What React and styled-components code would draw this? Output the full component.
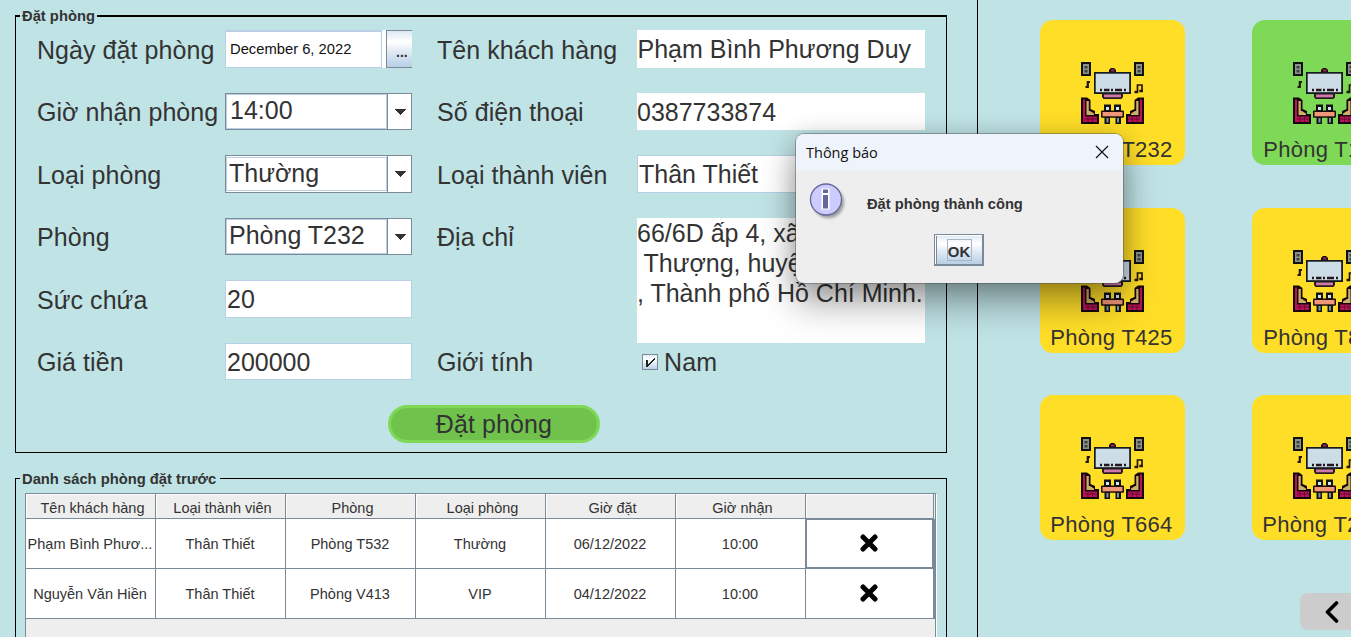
import React from "react";
import styled, { createGlobalStyle } from "styled-components";

const Global = createGlobalStyle`
  * { box-sizing: border-box; }
  html, body { margin: 0; height: 637px; overflow: hidden; }
  body { background: #c0e3e6; color: #333; font-family: "Liberation Sans", Arial, sans-serif; }
`;

const Page = styled.div`
  position: relative;
  display: flex;
  width: 1351px;
  height: 637px;
  overflow: hidden;
  background: #c0e3e6;
`;

const Left = styled.main`
  flex: none;
  width: 978px;
  height: 637px;
  padding: 8px 0 0 15px;
  border-right: 1px solid #000;
  overflow: hidden;
`;

const Group = styled.fieldset`
  width: 932px;
  height: ${(p) => p.$height}px;
  margin: 0 0 ${(p) => p.$after || 0}px;
  padding: 0 0 0 4px;
  border: 1px solid #000;
  border-top-width: ${(p) => p.$top || 1}px;
  min-width: 0;
`;

const Legend = styled.legend`
  width: ${(p) => p.$width}px;
  height: ${(p) => p.$height}px;
  padding: 0 0 0 2px;
  font-size: 14.75px;
  font-weight: bold;
  line-height: ${(p) => p.$height + 1}px;
  white-space: nowrap;
`;

const Form = styled.div`
  display: grid;
  grid-template-columns: 188px 187px 25px 200px 288px;
  grid-template-rows: repeat(6, 37.5px);
  row-gap: 25px;
  margin: ${(p) => p.$top}px 0 0 17px;
`;

const Label = styled.label`
  grid-column: ${(p) => p.$col};
  display: flex;
  align-items: center;
  padding-top: 1.5px;
  font-size: 25px;
  line-height: 30px;
  letter-spacing: 0.06px;
  white-space: nowrap;
`;

const Field = styled.div`
  grid-column: ${(p) => p.$col};
  display: flex;
  align-items: center;
  padding-top: ${(p) => (p.$plain ? 2 : 1.5)}px;
  padding-left: ${(p) => p.$pad ?? 1}px;
  background: #fff;
  border: ${(p) => (p.$plain ? "0" : "1px solid #b8cfe5")};
  font-size: 25px;
  white-space: nowrap;
`;

const Combo = styled.div`
  grid-column: 2;
  display: flex;
  background: #fff;
  border: 1px solid #7a8a99;
`;

const ComboText = styled.div`
  flex: 1;
  display: flex;
  align-items: center;
  margin: ${(p) => (p.$inset ? "1px 0" : "0")};
  padding: 0 0 ${(p) => p.$lift}px ${(p) => p.$pad}px;
  border: 1px solid #b8cfe5;
  font-size: 25px;
  white-space: nowrap;
`;

const ComboArrow = styled.div`
  width: 24px;
  display: flex;
  align-items: center;
  justify-content: center;
  padding-top: 1px;
  border-left: 1px solid #7a8a99;
`;

const DateRow = styled.div`
  grid-column: 2;
  display: flex;
  background: #fff;
`;

const DateText = styled.div`
  width: 157px;
  padding: 0 0 1px 4px;
  display: flex;
  align-items: center;
  border: 1px solid #b8cfe5;
  border-top-width: 2px;
  color: #111;
  font-size: 14.75px;
  white-space: nowrap;
`;

const DateButton = styled.div`
  width: 26px;
  margin-left: 4px;
  padding: 13px 0 0 9px;
  border: 1px solid #7a8a99;
  border-right: 0;
  background: linear-gradient(#dde8f3 0%, #fff 30%, #dde8f3 60%, #b8cfe5 100%);
  font-size: 14px;
  font-weight: bold;
  line-height: 16px;
`;

const Address = styled.div`
  grid-column: 5;
  grid-row: 4 / 6;
  height: 125px;
  background: #fff;
  font-size: 25px;
  line-height: 30px;
  white-space: pre;
`;

const Check = styled.div`
  grid-column: 5;
  display: flex;
  align-items: center;
  gap: 5px;
  padding: 1.5px 0 0 5px;
  font-size: 25px;
  letter-spacing: 0.2px;
`;

const Submit = styled.div`
  display: flex;
  align-items: center;
  justify-content: center;
  width: 212px;
  height: 38px;
  margin: 25px 0 0 368px;
  border: 3px solid #7ed957;
  border-radius: 19px;
  background: #70c24d;
  font-size: 25px;
  letter-spacing: 0.1px;
`;

const Scroll = styled.div`
  width: 912px;
  height: 160px;
  margin: 6px 0 0 5px;
  display: flex;
  border: 1px solid #7a8a99;
  border-right: 1px solid #fff;
  background: #eee;
`;

const Table = styled.div`
  width: 908px;
`;

const Rail = styled.div`
  width: 2px;
  height: 160px;
  border-right: 1px solid #7a8a99;
  background: linear-gradient(#eee 0 25px, #7a8a99 25px 125px, #eee 125px);
`;

const Row = styled.div`
  display: grid;
  grid-template-columns: repeat(6, 130px) 128px;
  height: ${(p) => (p.$head ? 25 : 50)}px;
`;

const Cell = styled.div`
  display: flex;
  align-items: center;
  justify-content: center;
  background: ${(p) => (p.$head ? "#eee" : "#fff")};
  border-right: 1px solid #7a8a99;
  border-bottom: 1px solid #7a8a99;
  box-shadow: ${(p) => (p.$head ? "inset 1px 1px #fff" : p.$focus ? "inset 1px 1px #7a8a99, inset -1px -1px #7a8a99" : "none")};
  padding-top: ${(p) => (p.$head ? 4 : 1)}px;
  padding-left: ${(p) => (p.$head ? 4 : 0)}px;
  padding-right: ${(p) => (p.$head ? 0 : 1)}px;
  font-size: 14.5px;
  white-space: nowrap;

  svg { margin-top: -3px; }
`;

const Right = styled.aside`
  flex: none;
  width: 373px;
  padding: 20px 0 0 62px;
  overflow: hidden;
`;

const Rooms = styled.div`
  display: grid;
  grid-template-columns: 145px 145px;
  grid-auto-rows: 145px;
  gap: 42.5px 67px;
`;

const Room = styled.div`
  display: flex;
  flex-direction: column;
  align-items: center;
  padding-top: 42px;
  border-radius: 13px;
  background: ${(p) => (p.$free ? "#7ed957" : "#ffde28")};
`;

const RoomName = styled.div`
  margin: 12px 2px 0 0;
  font-size: 22px;
  line-height: 28px;
  letter-spacing: 0.28px;
  white-space: nowrap;
`;

const Pager = styled.div`
  width: 80px;
  height: 37px;
  margin: 53px 0 0 260px;
  padding: 8px 0 0 25px;
  border-radius: 8px;
  background: #ccc;
`;

const Dialog = styled.div`
  position: absolute;
  left: 796px;
  top: 134px;
  width: 327px;
  height: 149px;
  border-radius: 8px;
  background: #eee;
  box-shadow: 0 0 0 1px rgba(70, 80, 85, 0.45), 0 20px 36px rgba(0, 0, 0, 0.36), 0 2px 24px rgba(0, 0, 0, 0.18);
`;

const TitleBar = styled.div`
  display: flex;
  align-items: center;
  justify-content: space-between;
  height: 37px;
  padding: 0 14px 1px 10px;
  border-radius: 8px 8px 0 0;
  background: #eff3fb;
  color: #111;
  font-family: "Open Sans", "Noto Sans", sans-serif;
  font-size: 14.5px;
`;

const Message = styled.div`
  display: flex;
  height: 63px;
  padding: 12px 0 0 13px;
  font-size: 14.7px;
  font-weight: bold;
`;

const MessageText = styled.div`
  padding: 12px 0 0 20px;
  line-height: 18px;
  white-space: nowrap;
`;

const Ok = styled.div`
  display: flex;
  align-items: center;
  justify-content: center;
  width: 50px;
  height: 32px;
  margin-left: 138px;
  border: 2px solid #7a8a99;
  border-left-width: 1px;
  border-top-width: 1px;
  box-shadow: inset 1px 1px #fff, inset 2px 0 #7a8a99;
  background: linear-gradient(#dde8f3 0%, #fff 30%, #dde8f3 60%, #b8cfe5 100%);
`;

const OkText = styled.div`
  width: 25px;
  height: 22px;
  margin-left: 1px;
  border: 1px solid #a3b8cc;
  font-size: 15px;
  font-weight: bold;
  line-height: 23px;
  display: flex;
  justify-content: center;
`;

const Arrow = () => (
  <svg width="12" height="6" viewBox="0 0 12 6" shapeRendering="crispEdges">
    <path d="M0 0H12L6 6Z" fill="#333" />
  </svg>
);

const Tick = () => (
  <svg width="17" height="17" viewBox="0 0 17 17">
    <defs>
      <linearGradient id="tick" x1="0" y1="0" x2="0" y2="1">
        <stop offset="0" stopColor="#dde8f3" />
        <stop offset=".3" stopColor="#fff" />
        <stop offset="1" stopColor="#b8cfe5" />
      </linearGradient>
    </defs>
    <rect x=".5" y=".5" width="15" height="15" fill="url(#tick)" stroke="#7a8a99" />
    <path d="M4 6h2v4h1V9h1V8h1V7h1V6h1V5h1V4h1v2h-1v1h-1v1h-1v1H9v1H8v1H7v1H6v1H4Z" fill="#222" />
  </svg>
);

const Cross = () => (
  <svg width="18" height="18" viewBox="0 0 18 18">
    <path d="M3 3L15 15M15 3L3 15" stroke="#000" strokeWidth="5" strokeLinecap="round" />
  </svg>
);

const Sofa = () => (
  <>
    <path d="M0 35.5H6L9.500 38V47L14 49V52H18V62H0Z" fill="#15080d" />
    <path d="M2 37.500H4V54.500H16V60H2Z" fill="#b81258" />
    <path d="M5.500 39H7.800V49H9L13 51.500V53H5.500Z" fill="#cdb068" />
    <path d="M4 57H16M7 55V60M11.500 55V60" stroke="#650a32" strokeWidth=".9" fill="none" />
  </>
);

const Speaker = () => (
  <>
    <rect width="10" height="14" fill="#10110f" />
    <rect x="2" y="2" width="6" height="10" fill="#8b938b" />
    <rect x="3.500" y="4" width="3" height="2.500" fill="#40423a" />
    <rect x="3.500" y="8" width="3" height="2.500" fill="#40423a" />
  </>
);

const Karaoke = () => (
  <svg width="63" height="62" viewBox="0 0 63 62">
    <Speaker />
    <g transform="translate(53 0)"><Speaker /></g>
    <path d="M28 10V8L30 6H33L35 8V10Z" fill="#170a0e" />
    <rect x="30" y="7.500" width="3.500" height="2" fill="#9e2853" />
    <rect x="13" y="10" width="37" height="22" fill="#151b1d" />
    <rect x="14.700" y="11.700" width="33.500" height="18.500" fill="#cddde7" />
    <path d="M19 28H21M23 28H28.500M30 28H32M34 28H41M43 28H45" stroke="#25151c" strokeWidth="2.600" />
    <path d="M21 32H42V35L40.500 37H22.500L21 35Z" fill="#2a171f" />
    <rect x="23" y="32.500" width="17" height="2.800" fill="#cd7aa9" />
    <path d="M4.500 25H6.800V20H9" stroke="#261504" strokeWidth="2.200" fill="none" />
    <path d="M54 30H56.500V23H61V29H58.500" stroke="#261504" strokeWidth="1.700" fill="none" />
    <path d="M53.500 30H57M58.500 29H62" stroke="#261504" strokeWidth="2.400" />
    <Sofa />
    <g transform="translate(63 0) scale(-1 1)"><Sofa /></g>
    <path d="M23 42.500H30V50H23ZM33 42.500H40V50H33ZM23.500 54H29V62H23.500ZM34.500 54H40V62H34.500Z" fill="#111417" />
    <path d="M25 45H28V48H25ZM35 45H38V48H35Z" fill="#d6e4ee" />
    <path d="M25.500 56H27.500V60.500H25.500ZM36 56H38V60.500H36Z" fill="#8295a1" />
    <rect x="20" y="48.500" width="23" height="7.300" rx="1" fill="#1c0e0b" />
    <rect x="21.500" y="50" width="20" height="4.300" fill="#f09878" />
  </svg>
);

const Info = () => (
  <svg width="38" height="38" viewBox="0 0 38 38">
    <defs>
      <filter id="soft"><feGaussianBlur stdDeviation="1.500" /></filter>
    </defs>
    <circle cx="19.500" cy="19.500" r="15.500" fill="#777" opacity=".7" filter="url(#soft)" />
    <circle cx="17" cy="16.500" r="15.500" fill="#ccf" stroke="#669" strokeWidth="1.300" />
    <path d="M12.500 5.500H20.500V26.500H12.500Z" fill="#fff" />
    <path d="M14 6.500H19V10H14ZM14 12H19V25.500H14Z" fill="#669" />
  </svg>
);

const headers = ["Tên khách hàng", "Loại thành viên", "Phòng", "Loại phòng", "Giờ đặt", "Giờ nhận", ""];
const bookings = [
  ["Phạm Bình Phươ...", "Thân Thiết", "Phòng T532", "Thường", "06/12/2022", "10:00"],
  ["Nguyễn Văn Hiền", "Thân Thiết", "Phòng V413", "VIP", "04/12/2022", "10:00"],
];
const rooms = ["T232", "T114", "T425", "T811", "T664", "T214"];

export default function App() {
  return (
    <Page>
      <Global />
      <Left>
        <Group $height={445} $top={2} $after={17}>
          <Legend $width={77} $height={16}>Đặt phòng</Legend>
          <Form $top={6}>
            <Label $col={1}>Ngày đặt phòng</Label>
            <DateRow>
              <DateText>December 6, 2022</DateText>
              <DateButton>...</DateButton>
            </DateRow>
            <Label $col={4}>Tên khách hàng</Label>
            <Field $col={5} $plain $pad={0.5}>Phạm Bình Phương Duy</Field>

            <Label $col={1}>Giờ nhận phòng</Label>
            <Combo>
              <ComboText $pad={3} $lift={1}>14:00</ComboText>
              <ComboArrow><Arrow /></ComboArrow>
            </Combo>
            <Label $col={4}>Số điện thoại</Label>
            <Field $col={5} $plain $pad={0}>0387733874</Field>

            <Label $col={1}>Loại phòng</Label>
            <Combo>
              <ComboText $inset $pad={2} $lift={0}>Thường</ComboText>
              <ComboArrow><Arrow /></ComboArrow>
            </Combo>
            <Label $col={4}>Loại thành viên</Label>
            <Field $col={5}>Thân Thiết</Field>

            <Label $col={1}>Phòng</Label>
            <Combo>
              <ComboText $pad={2} $lift={1}>Phòng T232</ComboText>
              <ComboArrow><Arrow /></ComboArrow>
            </Combo>
            <Label $col={4}>Địa chỉ</Label>
            <Address>
              <div>66/6D ấp 4, xã Vĩnh Lộc</div>
              <div> Thượng, huyện Hóc Môn</div>
              <div>, Thành phố Hồ Chí Minh.</div>
            </Address>

            <Label $col={1}>Sức chứa</Label>
            <Field $col={2}>20</Field>

            <Label $col={1}>Giá tiền</Label>
            <Field $col={2}>200000</Field>
            <Label $col={4}>Giới tính</Label>
            <Check><Tick />Nam</Check>
          </Form>
          <Submit>Đặt phòng</Submit>
        </Group>

        <Group $height={200}>
          <Legend $width={200} $height={17}>Danh sách phòng đặt trước</Legend>
          <Scroll>
            <Table>
              <Row $head>
                {headers.map((h) => <Cell key={h} $head>{h}</Cell>)}
              </Row>
              {bookings.map((cells, i) => (
                <Row key={i}>
                  {cells.map((c, j) => <Cell key={j}>{c}</Cell>)}
                  <Cell $focus={i === 0}><Cross /></Cell>
                </Row>
              ))}
            </Table>
            <Rail />
          </Scroll>
        </Group>
      </Left>

      <Right>
        <Rooms>
          {rooms.map((r) => (
            <Room key={r} $free={r === "T114"}>
              <Karaoke />
              <RoomName>Phòng {r}</RoomName>
            </Room>
          ))}
        </Rooms>
        <Pager>
          <svg width="14" height="22" viewBox="0 0 14 22">
            <path d="M11.500 2L2.500 11L11.500 20" fill="none" stroke="#000" strokeWidth="3.600" strokeLinecap="round" strokeLinejoin="round" />
          </svg>
        </Pager>
      </Right>

      <Dialog>
        <TitleBar>
          Thông báo
          <svg width="14" height="14" viewBox="0 0 14 14">
            <path d="M1 1L13 13M13 1L1 13" stroke="#111" strokeWidth="1.200" />
          </svg>
        </TitleBar>
        <Message>
          <Info />
          <MessageText>Đặt phòng thành công</MessageText>
        </Message>
        <Ok><OkText>OK</OkText></Ok>
      </Dialog>
    </Page>
  );
}
